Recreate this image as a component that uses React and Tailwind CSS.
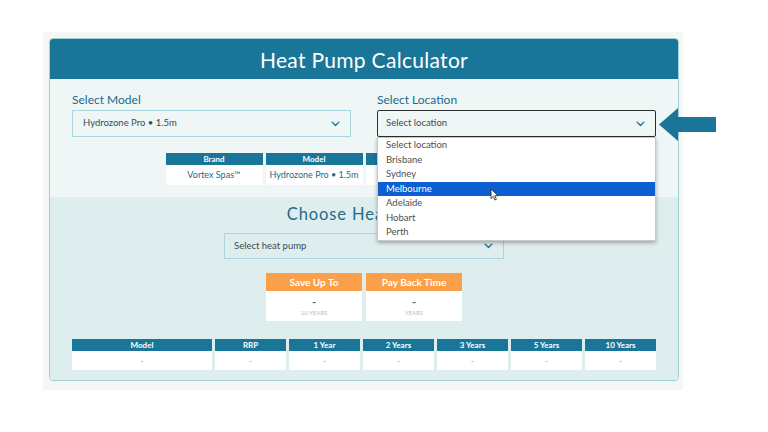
import React from "react";

const font = { fontFamily: "Lato, 'Open Sans', sans-serif" };

const Chevron = ({ className = "" }) => (
  <svg viewBox="0 0 12 8" className={"w-[9px] h-[6px] " + className} fill="none">
    <path d="M1.5 1.5 6 6l4.5-4.5" stroke="#1d6f8f" strokeWidth="1.8" strokeLinecap="round" strokeLinejoin="round" />
  </svg>
);

const locations = ["Select location", "Brisbane", "Sydney", "Melbourne", "Adelaide", "Hobart", "Perth"];

const specCols = [
  { head: "Brand", value: "Vortex Spas™" },
  { head: "Model", value: "Hydrozone Pro • 1.5m" },
  { head: "Location", value: "-" },
  { head: "Size", value: "-" },
];

const resultCols = [
  { head: "Model", w: "w-[140px]" },
  { head: "RRP", w: "w-[71px]" },
  { head: "1 Year", w: "w-[71px]" },
  { head: "2 Years", w: "w-[71px]" },
  { head: "3 Years", w: "w-[71px]" },
  { head: "5 Years", w: "w-[71px]" },
  { head: "10 Years", w: "w-[71px]" },
];

export default function App() {
  return (
    <div className="relative w-[768px] h-[432px] bg-white overflow-hidden" style={font}>
      <div className="ml-[43px] mt-[32px] w-[640px] h-[358px] bg-[#f6f6f4] pl-[6px] pt-[6px]">
        <div className="w-[630px] h-[343px] rounded-[4px] border-[1.5px] border-[#9fd0d6] flex flex-col">
          {/* header */}
          <div className="h-[40px] bg-[#1a7698] rounded-t-[3px] flex items-center justify-center">
            <h1 className="text-white text-[21px] leading-none tracking-[0.3px]">Heat Pump Calculator</h1>
          </div>

          {/* top section */}
          <div className="h-[118px] bg-[#eef6f6] px-[22px] pt-[13px]">
            <div className="flex gap-[26px]">
              <div className="w-[279px]">
                <div className="text-[12px] leading-[16px] text-[#226a8b]">Select Model</div>
                <div className="mt-[2px] h-[27px] border border-[#a9d6dc] bg-[#eef6f6] flex items-center justify-between pl-[10px] pr-[10px]">
                  <span className="text-[9.5px] text-[#3c4a52]">Hydrozone Pro • 1.5m</span>
                  <Chevron />
                </div>
              </div>
              <div className="w-[279px] relative">
                <div className="text-[12px] leading-[16px] text-[#226a8b]">Select Location</div>
                <div className="mt-[2px] h-[27px] border border-[#2d2d2d] rounded-[2px] bg-[#eef6f6] flex items-center justify-between pl-[8px] pr-[10px]">
                  <span className="text-[9.5px] text-[#3c4a52]">Select location</span>
                  <Chevron />
                </div>
                <div className="absolute left-0 top-[45px] w-[279px] bg-white border border-[#c8c8c8] shadow-[0_2px_4px_rgba(0,0,0,0.3)] z-20">
                  {locations.map((l) => (
                    <div
                      key={l}
                      className={
                        "h-[14.5px] flex items-center pl-[8px] text-[9.5px] " +
                        (l === "Melbourne" ? "bg-[#0b5fd0] text-white" : "text-[#4a4f54]")
                      }
                    >
                      {l}
                    </div>
                  ))}
                </div>
              </div>
            </div>

            <div className="mt-[16px] flex justify-center gap-[3px]">
              {specCols.map((c) => (
                <div key={c.head} className="w-[97px]">
                  <div className="h-[12px] bg-[#1a7698] flex items-center justify-center text-white text-[8px] font-bold">{c.head}</div>
                  <div className="h-[20px] bg-white flex items-center justify-center text-[9px] text-[#226a8b]">{c.value}</div>
                </div>
              ))}
            </div>
          </div>

          {/* lower section */}
          <div className="flex-1 bg-[#deeeee] rounded-b-[3px] px-[22px] pt-[7px] flex flex-col items-center">
            <div className="text-[16.5px] leading-[20px] tracking-[0.9px] text-[#226a8b]">Choose Heat Pump</div>
            <div className="mt-[9px] w-[280px] h-[26px] border border-[#a9d6dc] flex items-center justify-between pl-[9px] pr-[10px]">
              <span className="text-[9.5px] text-[#3c4a52]">Select heat pump</span>
              <Chevron />
            </div>

            <div className="mt-[14px] flex gap-[4px]">
              {[
                { head: "Save Up To", sub: "10 YEARS" },
                { head: "Pay Back Time", sub: "YEARS" },
              ].map((b) => (
                <div key={b.head} className="w-[96px]">
                  <div className="h-[18px] bg-[#fba04a] flex items-center justify-center text-white text-[10px] font-bold">{b.head}</div>
                  <div className="h-[30px] bg-white flex flex-col items-center justify-center">
                    <div className="text-[11px] leading-[12px] font-bold text-[#1a7698]">-</div>
                    <div className="text-[6px] leading-[8px] text-[#b5c4c8] mt-[1px]">{b.sub}</div>
                  </div>
                </div>
              ))}
            </div>

            <div className="mt-[18px] flex gap-[3px] self-start">
              {resultCols.map((c) => (
                <div key={c.head} className={c.w}>
                  <div className="h-[12px] bg-[#1a7698] flex items-center justify-center text-white text-[8px] font-bold">{c.head}</div>
                  <div className="h-[19px] bg-white flex items-center justify-center text-[8px] text-[#8a9aa0]">-</div>
                </div>
              ))}
            </div>
          </div>
        </div>
      </div>

      {/* pointer arrow */}
      <svg className="absolute left-[659px] top-[108px] w-[57px] h-[33px]" viewBox="0 0 57 33">
        <path d="M0 16.5 19 0v9h38v15H19v9z" fill="#1a7698" />
      </svg>

      {/* mouse cursor */}
      <svg className="absolute left-[490px] top-[188px] w-[9px] h-[13px] z-30" viewBox="0 0 9 13">
        <path d="M1 1v9.5l2.3-2.1 1.6 3.6 1.5-.7-1.6-3.5H8z" fill="#fff" stroke="#222" strokeWidth="0.8" strokeLinejoin="round" />
      </svg>
    </div>
  );
}
